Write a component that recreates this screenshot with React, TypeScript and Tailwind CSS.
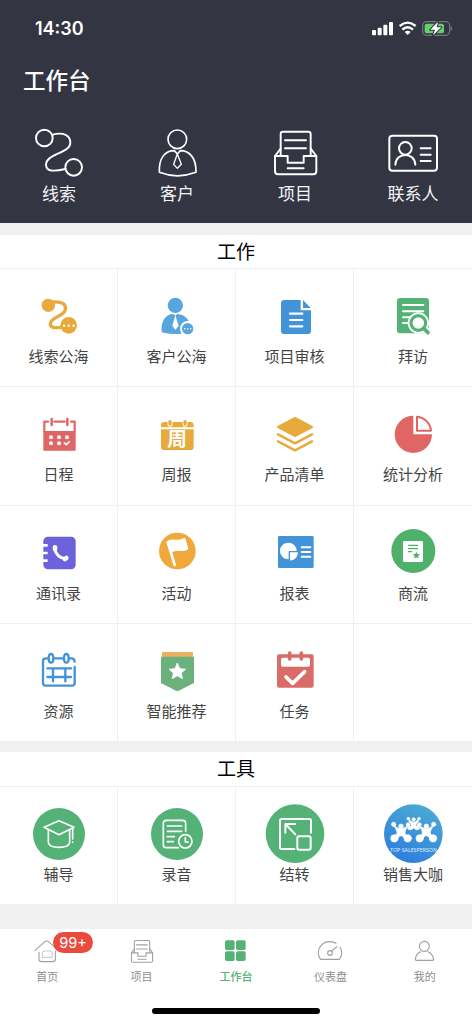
import React from 'react';

interface Entry {
  label: string;
  icon: React.ReactNode;
}

interface IconProps {
  children: React.ReactNode;
}

const ORANGE = '#e9aa3d';
const SKY = '#57a6dd';
const BLUE = '#4293d7';
const GREEN = '#54b277';
const RED = '#df6665';
const STAR = 'M0 -10 L3 -3.6 L9.8 -3 L4.7 1.6 L6.2 8.4 L0 4.9 L-6.2 8.4 L-4.7 1.6 L-9.8 -3 L-3 -3.6 Z';

const Icon: React.FC<IconProps> = ({ children }) => (
  <svg className="w-[60px] h-[60px] shrink-0" viewBox="0 0 180 180" fill="none" strokeLinecap="round" strokeLinejoin="round">
    {children}
  </svg>
);

const TabIcon: React.FC<IconProps> = ({ children }) => (
  <svg className="w-9 h-9 shrink-0" viewBox="0 0 108 108" fill="none" stroke="#a0a0a0" strokeWidth="3.3" strokeLinecap="round" strokeLinejoin="round">
    {children}
  </svg>
);

const TrayShape = () => (
  <>
    <path d="M47 95 V30 Q47 23 54 23 H130 Q137 23 137 30 V95" />
    <path d="M47 74 L30 96 M137 74 L154 96" />
    <path d="M30 96 H68 V116 H116 V96 H154 V142 Q154 151 145 151 H39 Q30 151 30 142 Z" />
    <path d="M60 49 H123 M60 73 H123 M68 133 H116" />
  </>
);

const shortcuts: Entry[] = [
  {
    label: '线索',
    icon: (
      <Icon>
        <g stroke="#fff" strokeWidth="5.8">
          <circle cx="46" cy="42" r="25" />
          <circle cx="134" cy="130" r="25" />
          <path d="M71 32 C104 23 124 35 124 56 C124 88 52 88 51 122 C51 143 74 143 109 135" />
        </g>
      </Icon>
    ),
  },
  {
    label: '客户',
    icon: (
      <Icon>
        <g stroke="#fff" strokeWidth="5">
          <circle cx="91" cy="46" r="28" />
          <path d="M37 145 C35 102 54 80 82 80 L91 90 L100 80 C128 80 148 102 147 145 Q91 166 37 145 Z" />
          <path d="M91 90 L80 121 L91 133 L103 121 Z" strokeWidth="4" />
        </g>
      </Icon>
    ),
  },
  {
    label: '项目',
    icon: (
      <Icon>
        <g stroke="#fff" strokeWidth="5.8"><TrayShape /></g>
      </Icon>
    ),
  },
  {
    label: '联系人',
    icon: (
      <Icon>
        <g stroke="#fff" strokeWidth="6">
          <rect x="19" y="35" width="143" height="105" rx="9" />
          <circle cx="67" cy="73" r="19" />
          <path d="M37 122 C40 83 94 83 97 122" />
          <path d="M113 73 H143 M113 92 H143 M113 111 H143" />
        </g>
      </Icon>
    ),
  },
];

const workItems: Entry[] = [
  {
    label: '线索公海',
    icon: (
      <Icon>
        <path d="M70 48 C102 45 112 57 109 71 C106 91 66 92 64 113 C63 127 80 126 98 124" stroke={ORANGE} strokeWidth="10" />
        <circle cx="58" cy="58" r="20" fill={ORANGE} />
        <circle cx="119" cy="118" r="25" fill={ORANGE} />
        <path d="M105 119 h.1 M119 119 h.1 M134 119 h.1" stroke="#fff" strokeWidth="7" />
      </Icon>
    ),
  },
  {
    label: '客户公海',
    icon: (
      <Icon>
        <circle cx="85" cy="58" r="23" fill={SKY} />
        <path d="M44 139 C41 106 55 84 79 84 L85 89 L91 84 C112 86 124 98 127 112 L104 143 Q70 147 44 139 Z" fill={SKY} />
        <path d="M85 88 L76 119 L85 132 L95 119 Z" fill="#fff" />
        <circle cx="122" cy="128" r="23" fill="#fff" />
        <circle cx="122" cy="128" r="17" fill={SKY} />
        <path d="M113 128 h.1 M122 128 h.1 M131 128 h.1" stroke="#fff" strokeWidth="4.5" />
      </Icon>
    ),
  },
  {
    label: '项目审核',
    icon: (
      <Icon>
        <path d="M58 42 H107 V73 H138 V134 Q138 144 128 144 H58 Q48 144 48 134 V52 Q48 42 58 42 Z" fill={BLUE} />
        <path d="M114 42 L137 66 H114 Z" fill={BLUE} />
        <path d="M75 83 H112 M75 102 H112 M75 121 H112" stroke="#fff" strokeWidth="6.5" />
      </Icon>
    ),
  },
  {
    label: '拜访',
    icon: (
      <Icon>
        <rect x="42" y="36" width="96" height="106" rx="9" fill={GREEN} />
        <path d="M60 57 H121 M60 76 H121 M60 94 H80 M60 111 H75" stroke="#fff" strokeWidth="6" />
        <path d="M106 111 L134 139" stroke="#fff" strokeWidth="24" />
        <circle cx="106" cy="111" r="32" fill="#fff" />
        <circle cx="106" cy="111" r="22" stroke={GREEN} strokeWidth="9.5" />
        <path d="M122 127 L135 140" stroke={GREEN} strokeWidth="11" />
      </Icon>
    ),
  },
  {
    label: '日程',
    icon: (
      <Icon>
        <path d="M43 81 H140 V138 Q140 140 138 140 H45 Q43 140 43 138 Z" fill={RED} />
        <path d="M57 53 H46 V84 M76 53 H107 M126 53 H137 V84" stroke={RED} strokeWidth="6.5" />
        <path d="M68 45 V63 M115 45 V63" stroke={RED} strokeWidth="7.5" />
        <path d="M66 100 h.1 M90 100 h.1 M114 100 h.1 M66 118 h.1 M90 118 h.1" stroke="#fff" strokeWidth="12" />
        <path d="M106 117 L112 122 L121 113" stroke="#fff" strokeWidth="5" />
      </Icon>
    ),
  },
  {
    label: '周报',
    icon: (
      <Icon>
        <path d="M42 70 V64 Q42 54 52 54 H130 Q140 54 140 64 V70 Z" fill={ORANGE} />
        <path d="M42 76 H140 V128 Q140 138 130 138 H52 Q42 138 42 128 Z" fill={ORANGE} />
        <path d="M69 53 V61 M114 53 V61" stroke="#fff" strokeWidth="15" />
        <path d="M69 53 V60 M114 53 V60" stroke={ORANGE} strokeWidth="10" />
        <text x="90" y="126" textAnchor="middle" fontSize="59" fontWeight="700" fill="#fff">周</text>
      </Icon>
    ),
  },
  {
    label: '产品清单',
    icon: (
      <Icon>
        <path d="M39 69 L90 42 L141 69 L90 96 Z" fill={ORANGE} stroke={ORANGE} strokeWidth="6" />
        <path d="M39 91 L90 118 L141 91 M39 112 L90 139 L141 112" stroke={ORANGE} strokeWidth="7.5" />
      </Icon>
    ),
  },
  {
    label: '统计分析',
    icon: (
      <Icon>
        <path d="M91 35 A56 56 0 1 0 147 91 H91 Z" fill={RED} />
        <path d="M102 38 A46 46 0 0 1 144 80 H102 Z" stroke={RED} strokeWidth="6" />
      </Icon>
    ),
  },
  {
    label: '通讯录',
    icon: (
      <Icon>
        <rect x="43" y="41" width="97" height="98" rx="14" fill="#6c63dc" />
        <path d="M40 67 H56 M40 90 H56 M40 113 H56" stroke="#fff" strokeWidth="8" strokeLinecap="butt" />
        <path d="M77 77 C80 94 93 108 111 106" stroke="#fff" strokeWidth="9" />
        <path d="M78 73 V78 M108 108 L112 105" stroke="#fff" strokeWidth="14" />
      </Icon>
    ),
  },
  {
    label: '活动',
    icon: (
      <Icon>
        <circle cx="91" cy="84" r="55" fill="#f1a83a" />
        <path d="M63 58 L83 126" stroke="#fff" strokeWidth="8" />
        <path d="M60 56 C75 44 92 59 113 45 L123 78 C106 89 90 75 71 89 Z" fill="#fff" stroke="#fff" strokeWidth="3" />
      </Icon>
    ),
  },
  {
    label: '报表',
    icon: (
      <Icon>
        <rect x="39" y="39" width="107" height="96" rx="4" fill={BLUE} />
        <circle cx="70" cy="84" r="25" fill="#fff" />
        <path d="M73 86 H101 Q101 113 73 115 Z" fill="#fff" stroke={BLUE} strokeWidth="4" />
        <path d="M110 73 H136 M110 87 H136 M110 101 H136" stroke="#fff" strokeWidth="6" />
      </Icon>
    ),
  },
  {
    label: '商流',
    icon: (
      <Icon>
        <circle cx="91" cy="84" r="66" fill="#4fb06a" />
        <rect x="60" y="54" width="60" height="63" rx="4" fill="#fff" />
        <path d="M76 67 H104 M76 77 H104 M76 86 H86" stroke="#4fb06a" strokeWidth="3.5" />
        <path d={STAR} transform="translate(100 97) scale(1.1)" fill="#4fb06a" />
      </Icon>
    ),
  },
  {
    label: '资源',
    icon: (
      <Icon>
        <g stroke={BLUE} strokeWidth="7">
          <path d="M137 62 Q136 52 128 52 H122 M103 52 H75 M56 52 H51 Q42 52 42 61 V126 Q42 134 50 134 H129 Q137 134 137 126 V78" />
          <ellipse cx="66" cy="52" rx="7" ry="13" />
          <ellipse cx="112" cy="52" rx="7" ry="13" />
          <path d="M55 82 H126 M55 108 H126 M72 84 V121 M109 84 V121" />
        </g>
      </Icon>
    ),
  },
  {
    label: '智能推荐',
    icon: (
      <Icon>
        <rect x="45" y="33" width="93" height="15" rx="3" fill="#efb05d" />
        <path d="M42 47 H141 V126 L95 149 Q91 151 87 149 L42 126 Z" fill="#6bb17d" />
        <path d={STAR} transform="translate(91 92) scale(2.5)" fill="#fff" stroke="#fff" strokeWidth="1" />
      </Icon>
    ),
  },
  {
    label: '任务',
    icon: (
      <Icon>
        <rect x="36" y="40" width="110" height="100" rx="6" fill="#d96b69" />
        <rect x="48" y="50" width="87" height="27" rx="5" fill="#fff" />
        <path d="M74 36 V54 M109 36 V54" stroke="#d96b69" strokeWidth="11" />
        <path d="M63 108 L83 127 L119 92" stroke="#fff" strokeWidth="11" />
      </Icon>
    ),
  },
];

const toolItems: Entry[] = [
  {
    label: '辅导',
    icon: (
      <Icon>
        <circle cx="90" cy="90" r="78" fill={GREEN} />
        <g stroke="#fff" strokeWidth="4.8">
          <path d="M45 70 L90 50 L135 70 L90 92 Z" />
          <path d="M58 79 V116 Q60 130 90 130 Q120 130 122 116 V79" />
          <path d="M131 73 V105 M131 114 V115" />
        </g>
      </Icon>
    ),
  },
  {
    label: '录音',
    icon: (
      <Icon>
        <circle cx="90" cy="90" r="78" fill={GREEN} />
        <g stroke="#fff" strokeWidth="5">
          <path d="M116 82 V58 Q116 49 107 49 H58 Q49 49 49 58 V122 Q49 131 58 131 H94" />
          <path d="M61 66 H104 M61 82 H104 M61 98 H82 M61 113 H79" />
          <circle cx="115" cy="112" r="20" />
          <path d="M115 101 V114 H124" />
        </g>
      </Icon>
    ),
  },
  {
    label: '结转',
    icon: (
      <Icon>
        <circle cx="90" cy="89" r="88" fill={GREEN} />
        <g stroke="#fff" strokeWidth="6">
          <path d="M138 86 V50 Q138 45 133 45 H50 Q45 45 45 50 V130 Q45 135 50 135 H88" />
          <rect x="97" y="97" width="40" height="40" rx="5" />
          <path d="M61 86 V60 H91 M61 60 L91 91" />
        </g>
      </Icon>
    ),
  },
  {
    label: '销售大咖',
    icon: (
      <Icon>
        <defs>
          <linearGradient id="sales" x1="0.75" y1="0.05" x2="0.3" y2="1">
            <stop offset="0" stopColor="#4aa9d4" />
            <stop offset="1" stopColor="#2f7ddd" />
          </linearGradient>
        </defs>
        <circle cx="91" cy="89" r="88" fill="url(#sales)" />
        <g fill="#fff" stroke="#fff" strokeWidth="2">
          <path d="M77 44 Q84 54 92 55 Q100 54 107 44 Q102 60 110 74 Q101 82 92 72 Q83 82 74 74 Q82 60 77 44 Z" />
          <circle cx="76" cy="44" r="4" />
          <circle cx="108" cy="44" r="4" />
          <circle cx="92" cy="46" r="5" />
          {[54, 130].map((x) => (
            <g key={x} transform={`translate(${x} 84)`}>
              <path d="M-23 -21 Q-10 -10 0 -9 Q10 -10 23 -21 Q11 -4 12 4 Q14 9 22 16 L14 26 Q8 11 0 11 Q-8 11 -14 26 L-22 16 Q-14 9 -12 4 Q-11 -4 -23 -21 Z" />
              <circle cx="-22" cy="-23" r="6.5" />
              <circle cx="22" cy="-23" r="6.5" />
              <circle cx="0" cy="-17" r="7" />
              <circle cx="-20" cy="19" r="11" />
              <circle cx="20" cy="19" r="11" />
            </g>
          ))}
        </g>
        <path d="M83 66 A9 9 0 0 0 69 56 M101 66 A9 9 0 0 1 115 56" stroke="#429bd8" strokeWidth="2" />
        <text x="21" y="143" fontSize="15" textLength="141" lengthAdjust="spacingAndGlyphs" fontFamily="Open Sans, sans-serif" fill="#e4f2ff">TOP SALESPERSON</text>
      </Icon>
    ),
  },
];

const tabs: Entry[] = [
  {
    label: '首页',
    icon: (
      <TabIcon>
        <path d="M18 52 L48 26 Q53 22 58 26 L80 44" />
        <path d="M30 57 V78 Q30 86 38 86 H71 Q79 86 79 78 V54" />
        <path d="M40 73 V61 Q40 54 48 54 H62 Q70 54 70 61 V73 Z" stroke="#cfcfcf" />
      </TabIcon>
    ),
  },
  {
    label: '项目',
    icon: (
      <TabIcon>
        <g transform="translate(7 10.5) scale(0.512)" strokeWidth="6.4"><TrayShape /></g>
      </TabIcon>
    ),
  },
  {
    label: '工作台',
    icon: (
      <TabIcon>
        <g fill={GREEN} stroke="none">
          <rect x="21" y="22" width="29" height="29" rx="5" />
          <rect x="54" y="22" width="29" height="29" rx="5" />
          <rect x="21" y="55" width="29" height="29" rx="5" />
          <rect x="54" y="55" width="29" height="29" rx="5" />
        </g>
      </TabIcon>
    ),
  },
  {
    label: '仪表盘',
    icon: (
      <TabIcon>
        <path d="M72 31 Q64 26 54 26 C34 26 19 41 19 60 Q19 71 26 79 H82 Q89 71 89 60 Q89 51 84 43" />
        <circle cx="54" cy="60" r="7" />
        <path d="M59 54 L75 41" />
      </TabIcon>
    ),
  },
  {
    label: '我的',
    icon: (
      <TabIcon>
        <circle cx="52" cy="40" r="15" />
        <path d="M41 56 Q27 62 25 79 Q25 82 28 82 H77 Q80 82 80 79 Q77 62 63 56" />
      </TabIcon>
    ),
  },
];

const StatusIcons = () => (
  <svg className="w-[81px] h-[15px]" viewBox="0 0 243 45" fill="none" strokeLinecap="round" strokeLinejoin="round">
    <g fill="#fff">
      <rect x="0" y="27" width="12" height="16" rx="3" />
      <rect x="17" y="20" width="12" height="23" rx="3" />
      <rect x="34" y="11" width="12" height="32" rx="3" />
      <rect x="51" y="3" width="12" height="40" rx="3" />
      <path d="M107 42 L98 33 Q107 26 116 33 Z" />
    </g>
    <path d="M83 15 Q107 -5 131 15 M91 26 Q107 12 123 26" stroke="#fff" strokeWidth="7" strokeLinecap="butt" />
    <rect x="152" y="2" width="81" height="41" rx="12" stroke="#77777f" strokeWidth="3.5" />
    <rect x="158" y="8" width="58" height="29" rx="6" fill="#65cf69" />
    <path d="M238 17 Q243 22 238 28 Z" fill="#77777f" stroke="#77777f" strokeWidth="2" />
    <path d="M198 2 L175 26 H189 L183 43 L208 19 H194 Z" fill="#fff" stroke="#333642" strokeWidth="6" paintOrder="stroke" />
  </svg>
);

const Cell: React.FC<{ item?: Entry; last: boolean }> = ({ item, last }) => (
  <div className={`flex flex-col items-center pt-[17px] border-t border-[#f0f0f0] ${last ? '' : 'border-r'}`}>
    {item && (
      <>
        {item.icon}
        <span className="h-5 leading-5 text-[15px] text-[#444] whitespace-nowrap">{item.label}</span>
      </>
    )}
  </div>
);

export default function App() {
  return (
    <div className="w-[472px] h-[1024px] flex flex-col overflow-hidden bg-[#f0f0f0] font-['Noto_Sans_CJK_SC',sans-serif]">
      <header className="h-[223px] shrink-0 bg-[#333642] text-white">
        <div className="h-[57px] flex items-center justify-between pl-[35px] pr-[19px]">
          <span className="font-['Inter',sans-serif] font-semibold text-[18px]">14:30</span>
          <StatusIcons />
        </div>
        <h1 className="h-11 leading-[44px] pl-[23px] text-[22.5px] font-medium">工作台</h1>
        <div className="grid grid-cols-4 mt-[23px]">
          {shortcuts.map((item) => (
            <div key={item.label} className="flex flex-col items-center">
              {item.icon}
              <span className="h-5 leading-[18px] text-[17px] text-[#f3f3f5]">{item.label}</span>
            </div>
          ))}
        </div>
      </header>

      <section className="mt-3 bg-white">
        <h2 className="h-[33px] leading-[31px] text-center text-[19px] text-black">工作</h2>
        <div className="grid grid-cols-4 grid-rows-[118px_119px_118px_118px]">
          {workItems.map((item, i) => (
            <Cell key={item.label} item={item} last={i % 4 === 3} />
          ))}
          <Cell last />
        </div>
      </section>

      <section className="mt-[11px] bg-white">
        <h2 className="h-[34px] leading-[32px] text-center text-[19px] text-black">工具</h2>
        <div className="grid grid-cols-4 grid-rows-[118px]">
          {toolItems.map((item, i) => (
            <Cell key={item.label} item={item} last={i === 3} />
          ))}
        </div>
      </section>

      <nav className="mt-[25px] flex-1 flex flex-col items-center bg-white pt-1">
        <div className="w-full grid grid-cols-5">
          {tabs.map((tab, i) => (
            <div key={tab.label} className="relative flex flex-col items-center">
              {tab.icon}
              <span className={`h-[15px] leading-[14px] text-[11px] ${i === 2 ? 'text-[#54b277] font-medium' : 'text-[#8e8e8e]'}`}>{tab.label}</span>
              {i === 0 && (
                <span className="absolute left-[53px] -top-px w-10 h-[21px] leading-[21px] rounded-full bg-[#ea4b3d] text-white text-center text-[14.5px] font-['Inter',sans-serif]">99+</span>
              )}
            </div>
          ))}
        </div>
        <div className="mt-6 w-[168px] h-1.5 rounded-full bg-black" />
      </nav>
    </div>
  );
}
